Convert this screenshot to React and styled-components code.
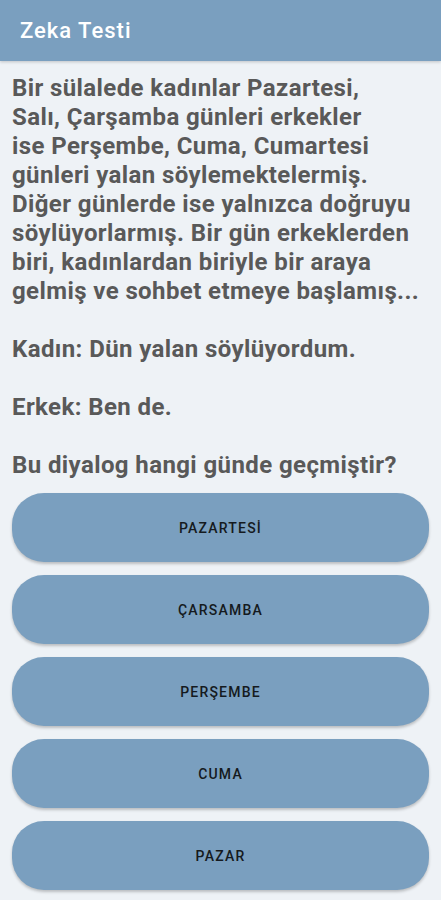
import React from 'react';
import styled, { createGlobalStyle } from "styled-components";

const GlobalStyle = createGlobalStyle`
    html, body {
        margin: 0;
        padding: 0;
        background: #eef2f6;
    }
    body {
        font-family: Roboto, "Noto Sans", Arial, sans-serif;
    }
`

// line breaks as in the app's balanced wrapping
const question = `Bir sülalede kadınlar Pazartesi,
Salı, Çarşamba günleri erkekler
ise Perşembe, Cuma, Cumartesi
günleri yalan söylemektelermiş.
Diğer günlerde ise yalnızca doğruyu
söylüyorlarmış. Bir gün erkeklerden
biri, kadınlardan biriyle bir araya
gelmiş ve sohbet etmeye başlamış...

Kadın: Dün yalan söylüyordum.

Erkek: Ben de.

Bu diyalog hangi günde geçmiştir?`;

const answers = ["PAZARTESİ", "ÇARSAMBA", "PERŞEMBE", "CUMA", "PAZAR"];

function App() {
    return (
        <Page>
            <GlobalStyle />
            <TopBar>
                <Title>Zeka Testi</Title>
            </TopBar>
            <Content>
                <Question>{question}</Question>
                <Answers>
                    {answers.map((a) => (
                        <AnswerButton key={a}>{a}</AnswerButton>
                    ))}
                </Answers>
            </Content>
        </Page>
    );
}

export default App;

const Page = styled.div`
    width: 441px;
    min-height: 900px;
    background: #eef2f6;
`

const TopBar = styled.header`
    height: 61px;
    background-color: #7a9fbf;
    display: flex;
    align-items: center;
    padding: 0 20px;
    box-shadow: 0 1px 3px rgba(0, 0, 0, 0.2);
`

const Title = styled.h1`
    margin: 0;
    color: #ffffff;
    font-size: 22px;
    font-weight: 500;
    letter-spacing: 1px;
    font-family: Roboto, sans-serif;
`

const Content = styled.main`
    padding: 13px 12px 0 12px;
`

const Question = styled.p`
    margin: 0;
    white-space: pre;
    color: #595959;
    font-size: 24px;
    font-weight: 700;
    line-height: 29px;
    letter-spacing: 0.4px;
    font-family: Roboto, sans-serif;
`

const Answers = styled.div`
    display: flex;
    flex-direction: column;
    gap: 13px;
    margin-top: 13px;
`

const AnswerButton = styled.button`
    height: 69px;
    width: 100%;
    border: none;
    border-radius: 32px;
    background-color: #7a9fbf;
    color: #151a20;
    font-family: Roboto, sans-serif;
    font-size: 14px;
    font-weight: 500;
    letter-spacing: 1.2px;
    box-shadow: 0 2px 3px rgba(0, 0, 0, 0.22);
    cursor: pointer;
`
